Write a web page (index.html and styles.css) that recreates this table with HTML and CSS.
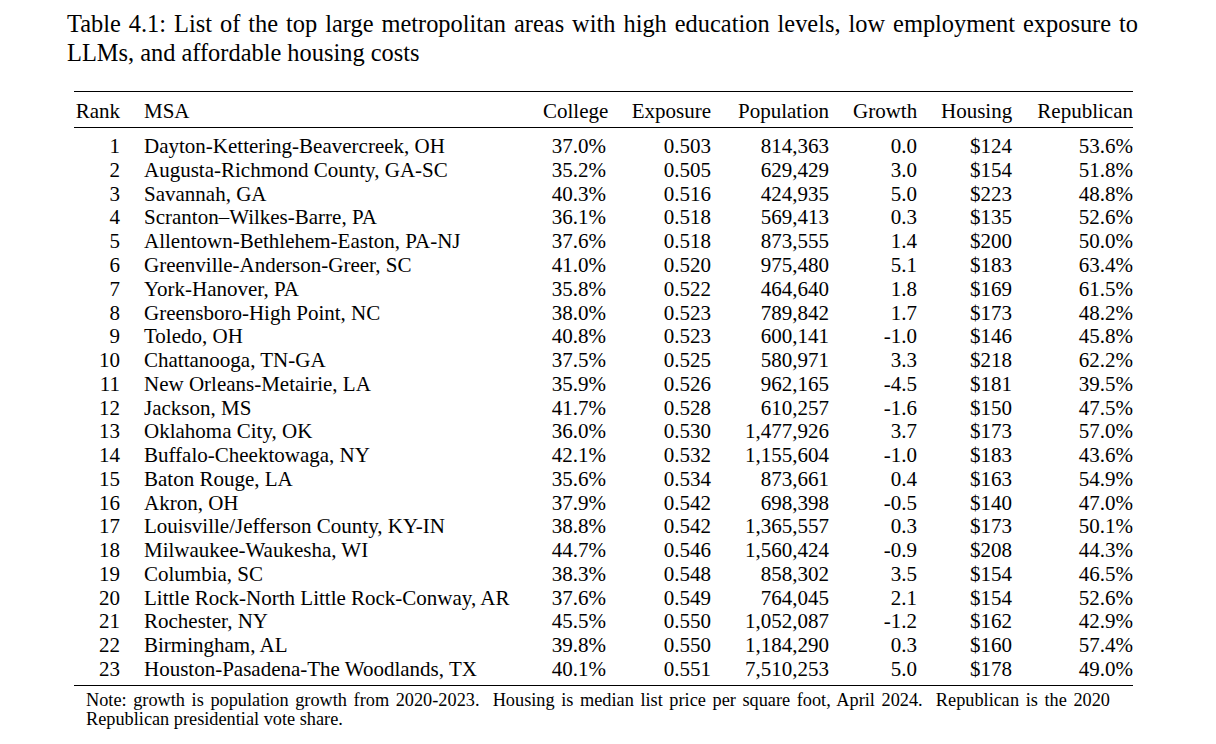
FILE: index.html
```html
<!DOCTYPE html>
<html lang="en">
<head>
<meta charset="utf-8">
<title>Table 4.1</title>
<link rel="stylesheet" href="styles.css">
</head>
<body>
<p class="caption"><span class="line-full">Table 4.1: List of the top large metropolitan areas with high education levels, low employment exposure to</span><span class="line-last">LLMs, and affordable housing costs</span></p>
<table class="data">
<colgroup>
<col class="c-rank"><col class="c-msa"><col class="c-college"><col class="c-exp"><col class="c-pop"><col class="c-growth"><col class="c-housing"><col class="c-rep">
</colgroup>
<thead>
<tr><th>Rank</th><th class="left">MSA</th><th>College</th><th>Exposure</th><th>Population</th><th>Growth</th><th>Housing</th><th>Republican</th></tr>
</thead>
<tbody>
<tr><td>1</td><td class="left">Dayton-Kettering-Beavercreek, OH</td><td>37.0%</td><td>0.503</td><td>814,363</td><td>0.0</td><td>$124</td><td>53.6%</td></tr>
<tr><td>2</td><td class="left">Augusta-Richmond County, GA-SC</td><td>35.2%</td><td>0.505</td><td>629,429</td><td>3.0</td><td>$154</td><td>51.8%</td></tr>
<tr><td>3</td><td class="left">Savannah, GA</td><td>40.3%</td><td>0.516</td><td>424,935</td><td>5.0</td><td>$223</td><td>48.8%</td></tr>
<tr><td>4</td><td class="left">Scranton–Wilkes-Barre, PA</td><td>36.1%</td><td>0.518</td><td>569,413</td><td>0.3</td><td>$135</td><td>52.6%</td></tr>
<tr><td>5</td><td class="left">Allentown-Bethlehem-Easton, PA-NJ</td><td>37.6%</td><td>0.518</td><td>873,555</td><td>1.4</td><td>$200</td><td>50.0%</td></tr>
<tr><td>6</td><td class="left">Greenville-Anderson-Greer, SC</td><td>41.0%</td><td>0.520</td><td>975,480</td><td>5.1</td><td>$183</td><td>63.4%</td></tr>
<tr><td>7</td><td class="left">York-Hanover, PA</td><td>35.8%</td><td>0.522</td><td>464,640</td><td>1.8</td><td>$169</td><td>61.5%</td></tr>
<tr><td>8</td><td class="left">Greensboro-High Point, NC</td><td>38.0%</td><td>0.523</td><td>789,842</td><td>1.7</td><td>$173</td><td>48.2%</td></tr>
<tr><td>9</td><td class="left">Toledo, OH</td><td>40.8%</td><td>0.523</td><td>600,141</td><td>-1.0</td><td>$146</td><td>45.8%</td></tr>
<tr><td>10</td><td class="left">Chattanooga, TN-GA</td><td>37.5%</td><td>0.525</td><td>580,971</td><td>3.3</td><td>$218</td><td>62.2%</td></tr>
<tr><td>11</td><td class="left">New Orleans-Metairie, LA</td><td>35.9%</td><td>0.526</td><td>962,165</td><td>-4.5</td><td>$181</td><td>39.5%</td></tr>
<tr><td>12</td><td class="left">Jackson, MS</td><td>41.7%</td><td>0.528</td><td>610,257</td><td>-1.6</td><td>$150</td><td>47.5%</td></tr>
<tr><td>13</td><td class="left">Oklahoma City, OK</td><td>36.0%</td><td>0.530</td><td>1,477,926</td><td>3.7</td><td>$173</td><td>57.0%</td></tr>
<tr><td>14</td><td class="left">Buffalo-Cheektowaga, NY</td><td>42.1%</td><td>0.532</td><td>1,155,604</td><td>-1.0</td><td>$183</td><td>43.6%</td></tr>
<tr><td>15</td><td class="left">Baton Rouge, LA</td><td>35.6%</td><td>0.534</td><td>873,661</td><td>0.4</td><td>$163</td><td>54.9%</td></tr>
<tr><td>16</td><td class="left">Akron, OH</td><td>37.9%</td><td>0.542</td><td>698,398</td><td>-0.5</td><td>$140</td><td>47.0%</td></tr>
<tr><td>17</td><td class="left">Louisville/Jefferson County, KY-IN</td><td>38.8%</td><td>0.542</td><td>1,365,557</td><td>0.3</td><td>$173</td><td>50.1%</td></tr>
<tr><td>18</td><td class="left">Milwaukee-Waukesha, WI</td><td>44.7%</td><td>0.546</td><td>1,560,424</td><td>-0.9</td><td>$208</td><td>44.3%</td></tr>
<tr><td>19</td><td class="left">Columbia, SC</td><td>38.3%</td><td>0.548</td><td>858,302</td><td>3.5</td><td>$154</td><td>46.5%</td></tr>
<tr><td>20</td><td class="left">Little Rock-North Little Rock-Conway, AR</td><td>37.6%</td><td>0.549</td><td>764,045</td><td>2.1</td><td>$154</td><td>52.6%</td></tr>
<tr><td>21</td><td class="left">Rochester, NY</td><td>45.5%</td><td>0.550</td><td>1,052,087</td><td>-1.2</td><td>$162</td><td>42.9%</td></tr>
<tr><td>22</td><td class="left">Birmingham, AL</td><td>39.8%</td><td>0.550</td><td>1,184,290</td><td>0.3</td><td>$160</td><td>57.4%</td></tr>
<tr><td>23</td><td class="left">Houston-Pasadena-The Woodlands, TX</td><td>40.1%</td><td>0.551</td><td>7,510,253</td><td>5.0</td><td>$178</td><td>49.0%</td></tr>
</tbody>
</table>
<p class="note"><span class="line-full">Note: growth is population growth from 2020-2023.&nbsp; Housing is median list price per square foot, April 2024.&nbsp; Republican is the 2020</span><span class="line-last">Republican presidential vote share.</span></p>
</body>
</html>
```

FILE: styles.css
```css
html, body {
  margin: 0;
  padding: 0;
  background: #ffffff;
}

body {
  font-family: "Liberation Serif", "Times New Roman", serif;
  color: #000000;
}

.line-full {
  display: block;
  text-align: justify;
  text-align-last: justify;
}

.line-last {
  display: block;
  text-align: left;
}

.caption {
  margin: 0 0 0 67px;
  padding-top: 9.8px;
  width: 1071px;
  font-size: 24.4px;
  line-height: 28.7px;
}

.data {
  margin: 23.5px 0 0 74px;
  width: 1059px;
  table-layout: fixed;
  border-collapse: separate;
  border-spacing: 0;
  border-top: 1.8px solid #000;
  border-bottom: 1.8px solid #000;
  font-size: 21px;
  line-height: 23.77px;
}

.c-rank { width: 58px; }
.c-msa { width: 399px; }
.c-college { width: 87px; }
.c-exp { width: 105px; }
.c-pop { width: 118px; }
.c-growth { width: 88px; }
.c-housing { width: 95px; }
.c-rep { width: 109px; }

.data th,
.data td {
  padding: 0 12px;
  text-align: right;
  white-space: nowrap;
  font-weight: normal;
}

.data th:first-child,
.data td:first-child {
  padding-left: 0;
}

.data th:last-child,
.data td:last-child {
  padding-right: 0;
}

.data .left {
  text-align: left;
}

.data thead th {
  padding-top: 8px;
  padding-bottom: 3.5px;
  border-bottom: 1px solid #000;
}

.data tbody tr:first-child td {
  padding-top: 7.2px;
}

.data tbody tr:last-child td {
  padding-bottom: 3.3px;
}

.note {
  margin: 5px 0 0 86px;
  width: 1024px;
  font-size: 18.3px;
  line-height: 19px;
}
```
